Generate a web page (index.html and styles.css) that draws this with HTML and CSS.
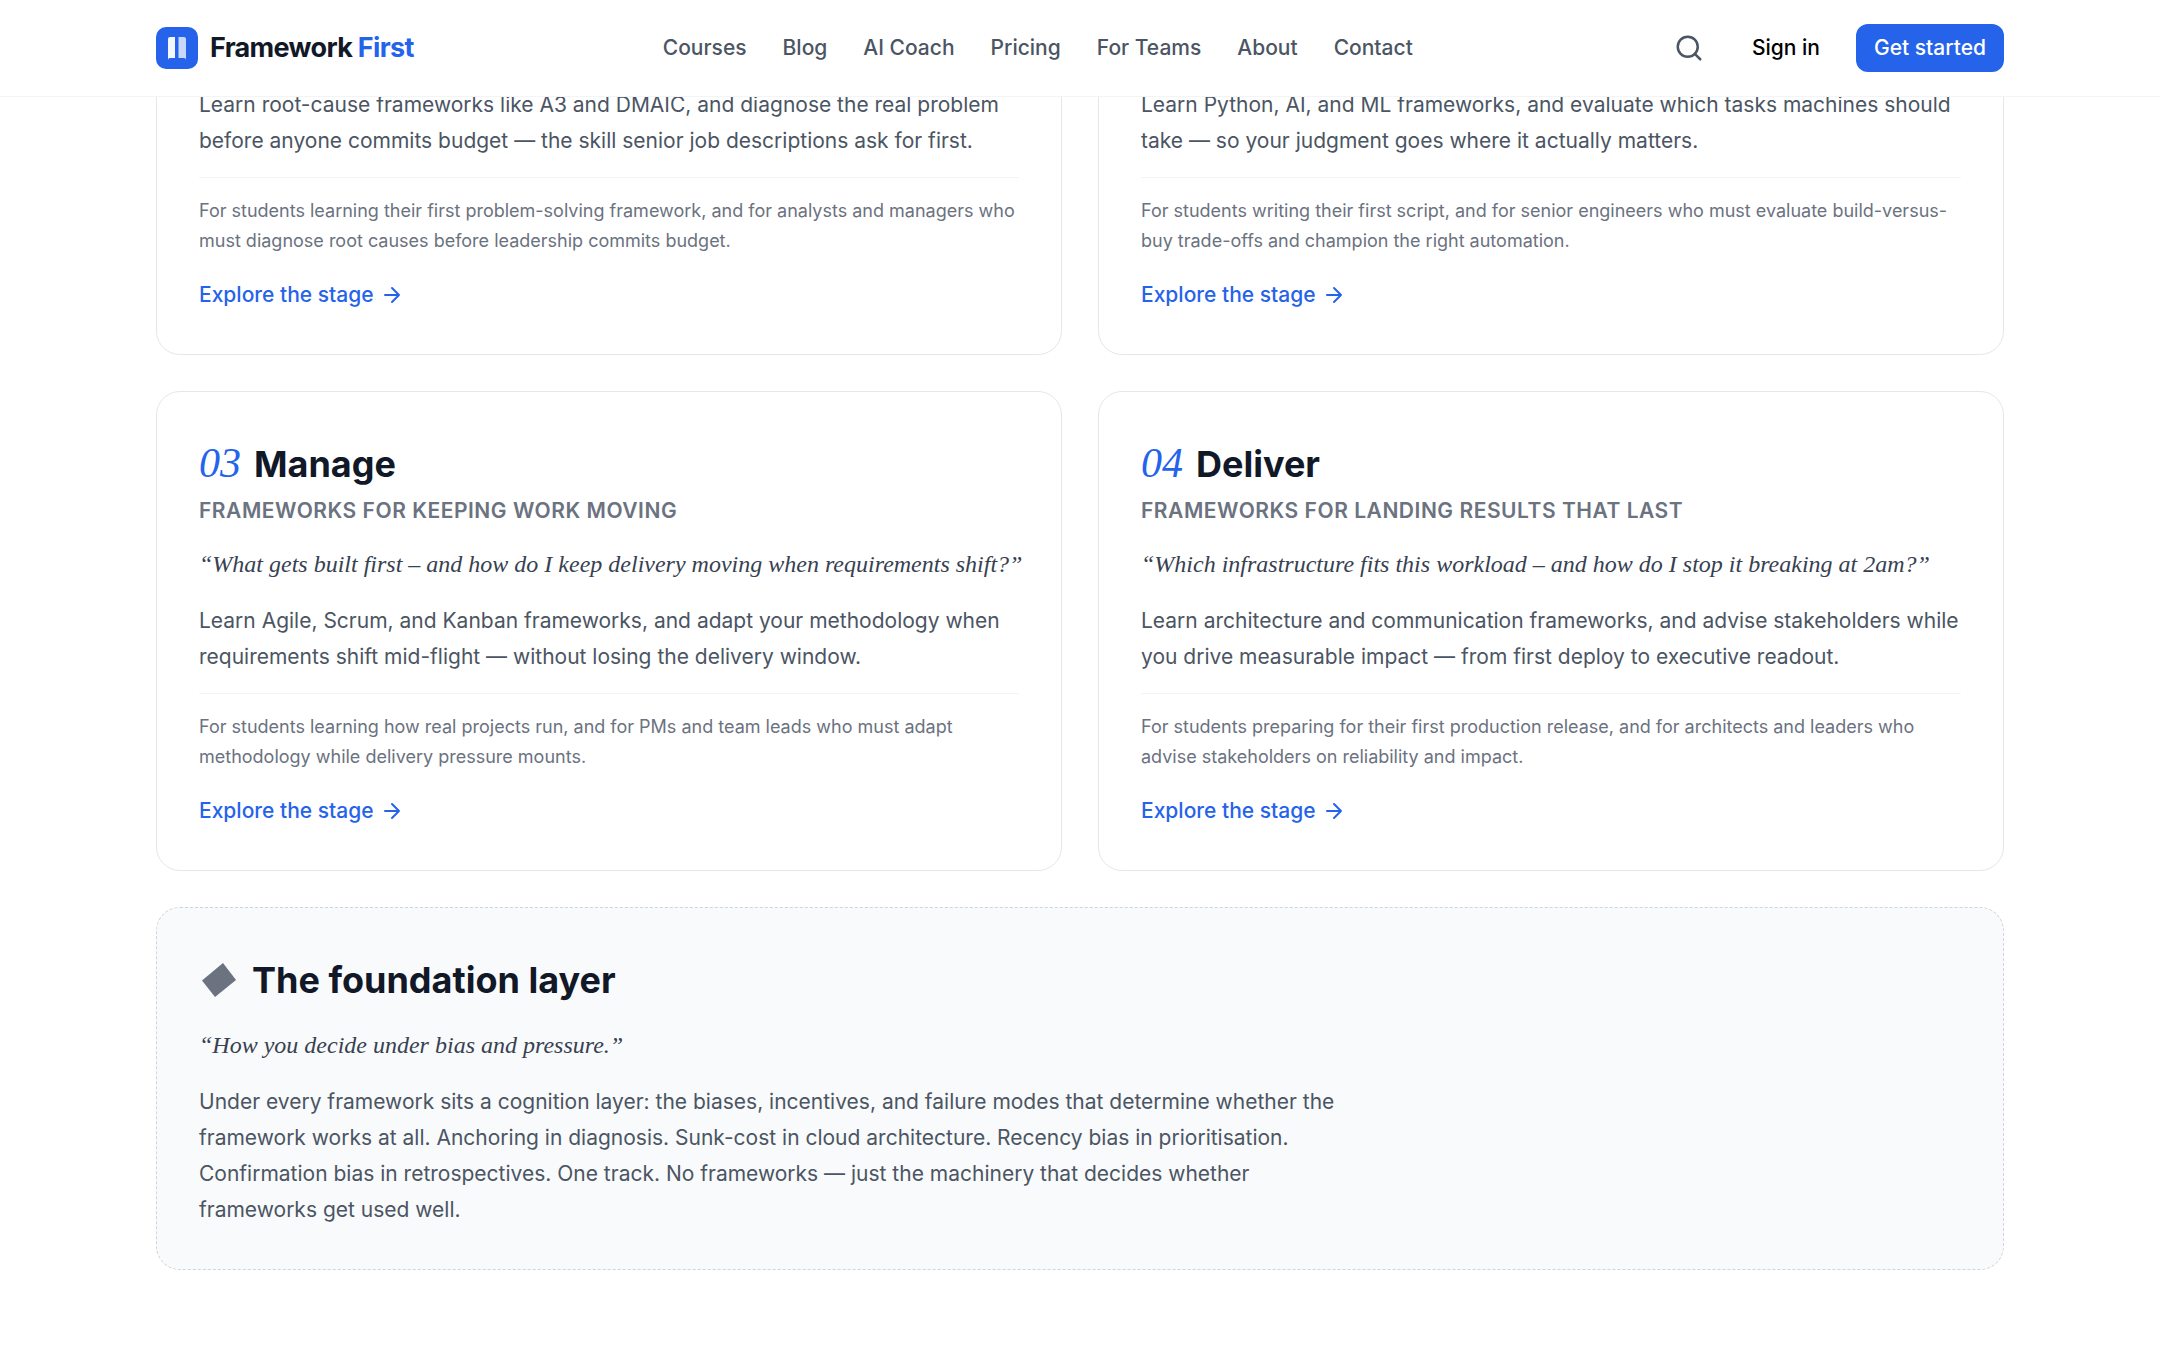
FILE: index.html
```html
<!DOCTYPE html>
<html lang="en">
<head>
  <meta charset="UTF-8">
  <meta name="viewport" content="width=device-width, initial-scale=1.0">
  <title>Framework First</title>
  <link rel="stylesheet" href="styles.css">
</head>
<body>
  <header class="site-header">
    <div class="container header-inner">
      <a class="brand" href="#">
        <svg class="brand-logo" viewBox="0 0 42 42" aria-hidden="true">
          <rect width="42" height="42" rx="10" fill="#2563eb"/>
          <path d="M12 12a2 2 0 0 1 2-2h5v21h-5a2 2 0 0 0-2 2z" fill="#fff" fill-opacity=".95"/>
          <path d="M30 12a2 2 0 0 0-2-2h-5.500v21h5.500a2 2 0 0 1 2 2z" fill="#fff" fill-opacity=".75"/>
        </svg>
        <span>Framework <span class="brand-accent">First</span></span>
      </a>
      <nav class="main-nav">
        <a href="#">Courses</a>
        <a href="#">Blog</a>
        <a href="#">AI Coach</a>
        <a href="#">Pricing</a>
        <a href="#">For Teams</a>
        <a href="#">About</a>
        <a href="#">Contact</a>
      </nav>
      <div class="header-actions">
        <button class="search-btn" type="button" aria-label="Search">
          <svg viewBox="0 0 24 24" fill="none" stroke="currentColor" stroke-width="2" stroke-linecap="round" stroke-linejoin="round">
            <path d="M21 21l-4.35-4.35"/>
            <circle cx="11" cy="11" r="8"/>
          </svg>
        </button>
        <a class="sign-in" href="#">Sign in</a>
        <a class="btn-primary" href="#">Get started</a>
      </div>
    </div>
  </header>

  <main class="container stages">
    <article class="card">
      <p class="card-text">Learn root-cause frameworks like A3 and DMAIC, and diagnose the real problem before anyone commits budget — the skill senior job descriptions ask for first.</p>
      <p class="card-audience">For students learning their first problem-solving framework, and for analysts and managers who must diagnose root causes before leadership commits budget.</p>
      <a class="card-link" href="#">Explore the stage
        <svg viewBox="0 0 24 24" aria-hidden="true"><path d="M5 12h14M12 5l7 7-7 7"/></svg>
      </a>
    </article>

    <article class="card">
      <p class="card-text">Learn Python, AI, and ML frameworks, and evaluate which tasks machines should take — so your judgment goes where it actually matters.</p>
      <p class="card-audience">For students writing their first script, and for senior engineers who must evaluate build-versus-buy trade-offs and champion the right automation.</p>
      <a class="card-link" href="#">Explore the stage
        <svg viewBox="0 0 24 24" aria-hidden="true"><path d="M5 12h14M12 5l7 7-7 7"/></svg>
      </a>
    </article>

    <article class="card">
      <div class="card-heading">
        <span class="card-number">03</span>
        <h3>Manage</h3>
      </div>
      <p class="card-kicker">Frameworks for keeping work moving</p>
      <p class="card-quote">“What gets built first – and how do I keep delivery moving when requirements shift?”</p>
      <p class="card-text">Learn Agile, Scrum, and Kanban frameworks, and adapt your methodology when requirements shift mid-flight — without losing the delivery window.</p>
      <p class="card-audience">For students learning how real projects run, and for PMs and team leads who must adapt methodology while delivery pressure mounts.</p>
      <a class="card-link" href="#">Explore the stage
        <svg viewBox="0 0 24 24" aria-hidden="true"><path d="M5 12h14M12 5l7 7-7 7"/></svg>
      </a>
    </article>

    <article class="card">
      <div class="card-heading">
        <span class="card-number">04</span>
        <h3>Deliver</h3>
      </div>
      <p class="card-kicker">Frameworks for landing results that last</p>
      <p class="card-quote">“Which infrastructure fits this workload – and how do I stop it breaking at 2am?”</p>
      <p class="card-text">Learn architecture and communication frameworks, and advise stakeholders while you drive measurable impact — from first deploy to executive readout.</p>
      <p class="card-audience">For students preparing for their first production release, and for architects and leaders who advise stakeholders on reliability and impact.</p>
      <a class="card-link" href="#">Explore the stage
        <svg viewBox="0 0 24 24" aria-hidden="true"><path d="M5 12h14M12 5l7 7-7 7"/></svg>
      </a>
    </article>

    <article class="card card-foundation">
      <div class="card-heading">
        <svg class="diamond" viewBox="0 0 40 36" aria-hidden="true"><path d="M3 18.500L24 1l13 17-21 17z"/></svg>
        <h3>The foundation layer</h3>
      </div>
      <p class="card-quote">“How you decide under bias and pressure.”</p>
      <p class="card-text">Under every framework sits a cognition layer: the biases, incentives, and failure modes that determine whether the framework works at all. Anchoring in diagnosis. Sunk-cost in cloud architecture. Recency bias in prioritisation. Confirmation bias in retrospectives. One track. No frameworks — just the machinery that decides whether frameworks get used well.</p>
    </article>
  </main>
</body>
</html>
```
FILE: styles.css
```css
* {
  box-sizing: border-box;
}

body {
  margin: 0;
  font-family: Inter, sans-serif;
  font-size: 21px;
  line-height: 36px;
  color: #4b5563;
  background: #fff;
}

a {
  color: inherit;
  text-decoration: none;
}

h3,
p {
  margin: 0;
}

.container {
  max-width: 1920px;
  margin: 0 auto;
  padding: 0 36px;
}

/* Header */
.site-header {
  position: fixed;
  top: 0;
  left: 0;
  right: 0;
  z-index: 10;
  background: #fff;
  border-bottom: 1px solid #f3f4f6;
}

.header-inner {
  display: flex;
  align-items: center;
  justify-content: space-between;
  height: 96px;
}

.brand {
  display: flex;
  align-items: center;
  gap: 12px;
  font-size: 27px;
  font-weight: 700;
  letter-spacing: -0.025em;
  color: #111827;
}

.brand-logo {
  width: 42px;
  height: 42px;
}

.brand-accent {
  color: #2563eb;
}

.main-nav {
  display: flex;
  gap: 36px;
  font-weight: 500;
}

.header-actions {
  display: flex;
  align-items: center;
  gap: 36px;
  font-weight: 500;
}

.search-btn {
  display: flex;
  padding: 12px;
  border: none;
  background: none;
  color: #4b5563;
  cursor: pointer;
}

.search-btn svg {
  width: 30px;
  height: 30px;
}

.sign-in {
  color: #000;
}

.btn-primary {
  padding: 6px 18px;
  border-radius: 12px;
  background: #2563eb;
  color: #fff;
}

/* Stage cards */
.stages {
  display: grid;
  grid-template-columns: repeat(2, minmax(0, 1fr));
  gap: 36px;
  padding-top: 43px;
  padding-bottom: 80px;
}

.card {
  padding: 43px 42px 41px;
  border: 1px solid #e5e7eb;
  border-radius: 24px;
  background: #fff;
}

.card-heading {
  display: flex;
  align-items: baseline;
  gap: 13px;
}

.card-heading h3 {
  font-size: 36px;
  font-weight: 700;
  line-height: 58px;
  color: #111827;
}

.card-number {
  font-family: "Liberation Serif", serif;
  font-size: 42px;
  font-style: italic;
  line-height: 42px;
  color: #2563eb;
}

.card-kicker {
  font-weight: 600;
  letter-spacing: 0.025em;
  text-transform: uppercase;
  color: #6b7280;
}

.card-quote {
  margin: 17px 0 21px;
  font-family: "Liberation Serif", serif;
  font-size: 24px;
  font-style: italic;
  white-space: nowrap;
  color: #374151;
}

.card-audience {
  margin-top: 18px;
  padding-top: 18px;
  border-top: 1px solid #f3f4f6;
  font-size: 18px;
  line-height: 30px;
  color: #6b7280;
}

.card-link {
  display: inline-flex;
  align-items: center;
  gap: 6px;
  margin-top: 21px;
  font-weight: 500;
  color: #2563eb;
}

.card-link svg {
  width: 24px;
  height: 24px;
  fill: none;
  stroke: currentColor;
  stroke-width: 2;
  stroke-linecap: round;
  stroke-linejoin: round;
}

.card-foundation {
  grid-column: 1 / -1;
  border: 1px dashed #d1d5db;
  background: #f9fafb;
}

.card-foundation .card-heading {
  align-items: center;
}

.card-foundation .card-quote {
  margin-top: 18px;
}

.card-foundation .card-text {
  max-width: 1152px;
}

.diamond {
  width: 40px;
  height: 36px;
  fill: #6b7280;
}

@media (max-width: 2000px) {
  .card-quote {
    white-space: normal;
  }
}

@media (max-width: 1100px) {
  .stages {
    grid-template-columns: minmax(0, 1fr);
  }

  .main-nav {
    display: none;
  }
}
```
